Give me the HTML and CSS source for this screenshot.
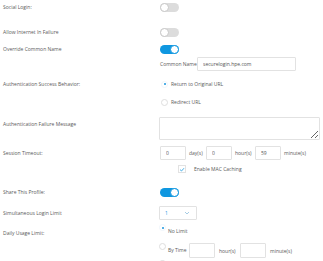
FILE: index.html
```html
<!DOCTYPE html>
<html lang="en">
<head>
  <meta charset="UTF-8" />
  <title>Captive Portal Profile</title>
  <link rel="stylesheet" href="styles.css">
</head>
<body>
  <div class="form">
    <div class="row r-social">
      <div class="label">Social Login:</div>
      <div class="field"><span class="toggle"></span></div>
    </div>
    <div class="row r-internet">
      <div class="label">Allow Internet In Failure</div>
      <div class="field"><span class="toggle"></span></div>
    </div>
    <div class="row r-override">
      <div class="label">Override Common Name</div>
      <div class="field"><span class="toggle on"></span></div>
    </div>
    <div class="row r-cn">
      <div class="label"></div>
      <div class="field">
        <span class="cn-label">Common Name</span>
        <input class="text cn-input" type="text" value="securelogin.hpe.com">
      </div>
    </div>
    <div class="row r-success">
      <div class="label">Authentication Success Behavior:</div>
      <div class="field stack">
        <label class="radio-line"><span class="radio checked"></span>Return to Original URL</label>
        <label class="radio-line second"><span class="radio"></span>Redirect URL</label>
      </div>
    </div>
    <div class="row r-failure">
      <div class="label">Authentication Failure Message</div>
      <div class="field"><textarea class="msg"></textarea></div>
    </div>
    <div class="row r-timeout">
      <div class="label">Session Timeout:</div>
      <div class="field">
        <input class="text small" type="text" value="0"><span class="unit">day(s)</span>
        <input class="text small" type="text" value="0"><span class="unit">hour(s)</span>
        <input class="text small" type="text" value="59"><span class="unit">minute(s)</span>
      </div>
    </div>
    <div class="row r-mac">
      <div class="label"></div>
      <div class="field">
        <span class="check">
          <svg width="6" height="5" viewBox="0 0 6 5"><path d="M1 2.6 L2.5 4 L5 1.2" fill="none" stroke="#1a9be0" stroke-width="0.8"/></svg>
        </span>
        <span class="check-text">Enable MAC Caching</span>
      </div>
    </div>
    <div class="row r-share">
      <div class="label">Share This Profile:</div>
      <div class="field"><span class="toggle on"></span></div>
    </div>
    <div class="row r-limit">
      <div class="label">Simultaneous Login Limit</div>
      <div class="field">
        <div class="select">
          <span>1</span>
          <svg width="6" height="4" viewBox="0 0 6 4"><path d="M1 1 L3 3 L5 1" fill="none" stroke="#7fb6d8" stroke-width="0.7"/></svg>
        </div>
      </div>
    </div>
    <div class="row r-daily">
      <div class="label">Daily Usage Limit:</div>
      <div class="field stack">
        <label class="radio-line drop"><span class="radio checked"></span><span class="rtext">No Limit</span></label>
        <label class="radio-line drop bytime"><span class="radio"></span><span class="rtext">By Time</span>
          <input class="text small" type="text"><span class="unit">hour(s)</span>
          <input class="text small" type="text"><span class="unit">minute(s)</span>
        </label>
        <label class="radio-line drop"><span class="radio"></span></label>
      </div>
    </div>
  </div>
</body>
</html>
```

FILE: styles.css
```css
html, body {
  margin: 0;
  padding: 0;
  background: #fff;
  font-family: 'Open Sans', sans-serif;
  font-size: 5px;
  color: #5a5a5a;
  overflow: hidden;
}
.form {
  display: flex;
  flex-direction: column;
  padding: 3px 0 0 3px;
}
.row {
  display: grid;
  grid-template-columns: 156px 1fr;
  align-items: center;
  white-space: nowrap;
}
.label {
  line-height: 9px;
}
.field {
  display: flex;
  align-items: center;
}
.field.stack {
  flex-direction: column;
  align-items: flex-start;
}
.r-internet { margin-top: 16px; }
.r-override { margin-top: 8px; }
.r-cn { margin-top: 3px; }
.r-success { margin-top: 9px; align-items: start; }
.r-failure { margin-top: 11px; align-items: start; }
.r-failure .label { margin-top: 3px; }
.r-timeout { margin-top: 6px; }
.r-mac { margin-top: 5px; }
.r-share { margin-top: 15px; }
.r-limit { margin-top: 9px; }
.r-daily { margin-top: 4px; align-items: start; }
.r-daily .label { margin-top: 5px; }

.toggle {
  position: relative;
  display: inline-block;
  width: 19px;
  height: 9px;
  border-radius: 5px;
  background: #dcdcdc;
  margin-left: 1px;
}
.toggle::after {
  content: "";
  position: absolute;
  top: 0;
  left: 0;
  width: 7px;
  height: 7px;
  border-radius: 50%;
  background: #fff;
  border: 1px solid #c8c8c8;
}
.toggle.on {
  background: #0f97e0;
}
.toggle.on::after {
  left: 10px;
  border-color: #0f97e0;
}

.cn-label {
  margin-left: 1px;
  width: 37px;
}
.text {
  box-sizing: border-box;
  height: 14px;
  border: 1px solid #e2e2e2;
  border-radius: 1px;
  padding: 0 5px;
  font-family: inherit;
  font-size: 5px;
  color: #555;
  background: #fff;
  outline: none;
}
.cn-input {
  width: 99px;
}
.text.small {
  width: 26px;
}
.unit {
  margin: 0 3px;
  width: 14px;
}
.r-timeout .field {
  margin-left: 1px;
}
.r-timeout .unit:nth-of-type(1) { width: 14px; }
.r-timeout .unit:nth-of-type(2) { width: 17px; }

.radio-line {
  display: flex;
  align-items: center;
  height: 8px;
  margin-left: 2px;
}
.radio-line.second {
  margin-top: 10px;
}
.radio {
  box-sizing: border-box;
  position: relative;
  display: inline-block;
  width: 7px;
  height: 7px;
  border-radius: 50%;
  border: 1px solid #dedede;
  background: #fff;
  margin-right: 3px;
}
.radio.checked {
  border-color: #f0f6fb;
}
.radio.checked::after {
  content: "";
  position: absolute;
  top: 1.5px;
  left: 1.5px;
  width: 2px;
  height: 2px;
  border-radius: 50%;
  background: #1a96df;
}
.r-daily .radio-line {
  margin-left: 0;
  align-items: flex-start;
}
.r-daily .rtext {
  margin-top: 4px;
  width: 19px;
}
.r-daily .radio {
  margin-right: 2px;
}
.radio-line.bytime {
  margin-top: 11px;
  height: 15px;
}
.bytime .text.small {
  margin-left: 2px;
  height: 15px;
  width: 26px;
}
.bytime .unit {
  margin-top: 5px;
  margin-left: 4px;
  width: 16px;
}
.radio-line.drop:last-child {
  margin-top: 2px;
}

.msg {
  box-sizing: border-box;
  width: 161px;
  height: 23px;
  border: 1px solid #e2e2e2;
  border-radius: 1px;
  margin: 0;
  padding: 2px;
  font-family: inherit;
  font-size: 5px;
  outline: none;
  display: block;
}

.r-mac .field {
  margin-left: 19px;
}
.check {
  box-sizing: border-box;
  display: inline-flex;
  align-items: center;
  justify-content: center;
  width: 8px;
  height: 8px;
  border: 1px solid #e2e2e2;
  margin-right: 8px;
}

.select {
  box-sizing: border-box;
  display: flex;
  align-items: center;
  justify-content: space-between;
  width: 38px;
  height: 14px;
  border: 1px solid #e2e2e2;
  border-radius: 1px;
  padding: 0 6px 0 5px;
  color: #1a96df;
}
```
